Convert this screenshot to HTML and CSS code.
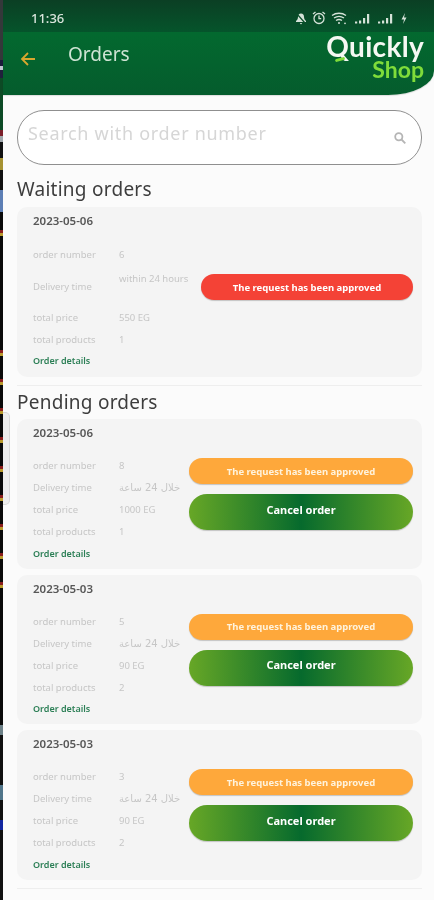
FILE: index.html
```html
<!DOCTYPE html>
<html lang="en">
<head>
<meta charset="utf-8">
<title>Orders</title>
<link rel="stylesheet" href="styles.css">
</head>
<body>
<div class="edge"></div>
<div class="phone">
  <div class="side-tab"></div>
  <div class="top">
    <div class="status">
      <span class="clock">11:36</span>
      <div class="status-icons">
        <svg width="12" height="13" viewBox="0 0 12 13"><path d="M6 1.500c-2 0-3 1.500-3 3.500 0 2-1 3-2 4v1h10V9c-1-1-2-2-2-4 0-2-1-3.500-3-3.500zM4.800 11h2.400L6 12.500z" fill="#d5e2d8"/><path d="M2 2l8 9" stroke="#0a4f2a" stroke-width="1.200"/></svg>
        <svg width="14" height="14" viewBox="0 0 14 14" fill="none" stroke="#d5e2d8" stroke-width="1.300"><circle cx="7" cy="7.500" r="5"/><path d="M7 4.500v3.200h2.200M1 3l2.500-2M13 3l-2.500-2"/></svg>
        <svg width="18" height="13" viewBox="0 0 18 13" fill="none" stroke="#d5e2d8" stroke-width="1.300"><path d="M1 3.500c4-3 10-3 14 0M3 6c3-2 7-2 10 0M5 8.500c2-1.300 4-1.300 6 0"/><circle cx="8" cy="11" r="1" fill="#d5e2d8" stroke="none"/><circle cx="14" cy="11.300" r=".9" fill="#d5e2d8" stroke="none"/></svg>
        <svg width="18" height="12" viewBox="0 0 18 12" fill="#d5e2d8"><rect x="1" y="9.500" width="2.200" height="2"/><rect x="5" y="8.500" width="2.200" height="3"/><rect x="9" y="6" width="2.200" height="5.500"/><rect x="13" y="2" width="2.200" height="9.500"/></svg>
        <svg width="18" height="12" viewBox="0 0 18 12" fill="#d5e2d8"><rect x="1" y="9.500" width="2.200" height="2"/><rect x="5" y="8.500" width="2.200" height="3"/><rect x="9" y="6" width="2.200" height="5.500"/><rect x="13" y="2" width="2.200" height="9.500"/></svg>
        <svg width="8" height="13" viewBox="0 0 8 13"><path d="M5 1L1.500 7.500H4L3 12l3.500-6.500H4z" fill="#d5e2d8"/></svg>
      </div>
    </div>
    <header class="app-bar">
      <svg class="back" width="16" height="14" viewBox="0 0 16 14" fill="none" stroke="#d9a62e" stroke-width="1.800"><path d="M15 7H2M8 1L2 7l6 6"/></svg>
      <h1 class="page-title">Orders</h1>
      <div class="logo">
        <span class="logo-main">Quickly</span>
        <span class="logo-sub">Shop</span>
        <span class="logo-swoosh"></span>
      </div>
    </header>
  </div>

  <main class="content">
    <div class="search">
      <span class="search-text">Search with order number</span>
      <svg class="search-icon" width="14" height="14" viewBox="0 0 14 14" fill="none" stroke="#b5b5b5" stroke-width="1.800"><circle cx="5.800" cy="5.800" r="3.600"/><path d="M8.500 8.500l3.800 3.800"/></svg>
    </div>

    <h2 class="section-title">Waiting orders</h2>
    <article class="card card-first">
      <div class="date">2023-05-06</div>
      <div class="card-body card-body-first">
        <div class="info info-tall">
          <span class="label">order number</span><span class="value">6</span>
          <span class="label tall">Delivery time</span><span class="value tall-value">within 24 hours</span>
          <span class="label">total price</span><span class="value">550 EG</span>
          <span class="label">total products</span><span class="value">1</span>
          <span class="details">Order details</span>
        </div>
        <div class="actions actions-single">
          <div class="pill pill-red">The request has been approved</div>
        </div>
      </div>
    </article>
    <div class="divider"></div>

    <h2 class="section-title section-title-next">Pending orders</h2>
    <div class="cards">
      <article class="card">
        <div class="date">2023-05-06</div>
        <div class="card-body">
          <div class="info">
            <span class="label">order number</span><span class="value">8</span>
            <span class="label">Delivery time</span><span class="value ar" dir="rtl">خلال 24 ساعة</span>
            <span class="label">total price</span><span class="value">1000 EG</span>
            <span class="label">total products</span><span class="value">1</span>
            <span class="details">Order details</span>
          </div>
          <div class="actions">
            <div class="pill pill-orange">The request has been approved</div>
            <div class="pill pill-green">Cancel order</div>
          </div>
        </div>
      </article>
      <article class="card">
        <div class="date">2023-05-03</div>
        <div class="card-body">
          <div class="info">
            <span class="label">order number</span><span class="value">5</span>
            <span class="label">Delivery time</span><span class="value ar" dir="rtl">خلال 24 ساعة</span>
            <span class="label">total price</span><span class="value">90 EG</span>
            <span class="label">total products</span><span class="value">2</span>
            <span class="details">Order details</span>
          </div>
          <div class="actions">
            <div class="pill pill-orange">The request has been approved</div>
            <div class="pill pill-green">Cancel order</div>
          </div>
        </div>
      </article>
      <article class="card">
        <div class="date">2023-05-03</div>
        <div class="card-body">
          <div class="info">
            <span class="label">order number</span><span class="value">3</span>
            <span class="label">Delivery time</span><span class="value ar" dir="rtl">خلال 24 ساعة</span>
            <span class="label">total price</span><span class="value">90 EG</span>
            <span class="label">total products</span><span class="value">2</span>
            <span class="details">Order details</span>
          </div>
          <div class="actions">
            <div class="pill pill-orange">The request has been approved</div>
            <div class="pill pill-green">Cancel order</div>
          </div>
        </div>
      </article>
    </div>
    <div class="divider"></div>
  </main>
</div>
</body>
</html>
```

FILE: styles.css
```css
* { box-sizing: border-box; }
html, body { margin: 0; padding: 0; }
body {
  width: 434px;
  height: 900px;
  overflow: hidden;
  display: flex;
  background: #fbfbfb;
  font-family: "Noto Sans", "DejaVu Sans", sans-serif;
}
.edge {
  width: 3px;
  flex: none;
  background:
    repeating-linear-gradient(to bottom, #0a0a0a 0 20px, #8a1c1c 20px 23px, #b99a2c 23px 26px, #0a0a0a 26px 29px) 0 330px / 100% 275px no-repeat,
    linear-gradient(to bottom,
      #34383a 0 60px, #1b1b3a 60px 66px, #bfc4d0 66px 70px, #20203c 70px 78px, #0d4a25 78px 130px,
      #7a1f2a 130px 136px, #9fa6ab 136px 142px, #111 142px 158px, #a69232 158px 170px, #111 170px 190px,
      #5d7fb5 190px 212px, #0a0a0a 212px 230px, #8a1c1c 230px 233px, #b99a2c 233px 236px, #0a0a0a 236px 330px,
      #0a0a0a 605px 725px, #6c8087 725px 735px, #111 735px 785px, #51758a 785px 800px, #111 800px 820px, #1226a0 820px 830px, #111 830px);
}
.phone {
  position: relative;
  flex: 1;
  min-width: 0;
  filter: blur(.45px);
}
.side-tab {
  position: absolute;
  left: 0;
  top: 412px;
  width: 7px;
  height: 93px;
  background: #eeeeee;
  border: 1px solid #d8d8d8;
  border-left: 0;
  border-radius: 0 5px 5px 0;
}
.status {
  height: 32px;
  display: flex;
  align-items: center;
  justify-content: space-between;
  padding: 8px 26px 4px 28px;
  background: linear-gradient(to bottom, #0b3f24, #05542b);
}
.clock {
  font-size: 13px;
  font-weight: 500;
  color: #dbe6dd;
}
.status-icons {
  display: flex;
  align-items: center;
  gap: 5px;
}
.app-bar {
  position: relative;
  height: 63px;
  display: flex;
  align-items: flex-start;
  padding: 0 0 0 17px;
  background: linear-gradient(to bottom, #03692f, #055c2d);
  border-bottom-right-radius: 46px 24px;
  box-shadow: 0 1px 1px rgba(0, 0, 0, .12);
}
.back { margin-top: 20px; }
.page-title {
  margin: 9px 0 0 32px;
  font-size: 19px;
  line-height: 26px;
  font-weight: 400;
  color: #cfe4d4;
}
.logo {
  position: absolute;
  right: 10px;
  top: 2px;
  display: flex;
  flex-direction: column;
  align-items: flex-end;
}
.logo-main {
  font-family: Lato, "Noto Sans", sans-serif;
  font-size: 28px;
  line-height: 25px;
  font-weight: 700;
  color: #f5f8f3;
  letter-spacing: .3px;
}
.logo-sub {
  font-family: Lato, "Noto Sans", sans-serif;
  font-size: 23px;
  line-height: 21px;
  font-weight: 700;
  color: #7fdc3a;
}
.logo-swoosh {
  position: absolute;
  left: 9px;
  top: 24px;
  width: 10px;
  height: 3px;
  border-radius: 2px;
  background: #7fdc3a;
  transform: rotate(-15deg);
}
.content { padding: 15px 12px 0 14px; }
.search {
  height: 55px;
  display: flex;
  align-items: flex-start;
  justify-content: space-between;
  padding: 9px 14px 0 10px;
  background: #fff;
  border: 1px solid #8f8f8f;
  border-radius: 27px;
}
.search-text {
  font-size: 18px;
  line-height: 26px;
  letter-spacing: .7px;
  color: #d6d6d6;
}
.search-icon { margin: 11px 0 0; }
.section-title {
  margin: 12px 0 6px;
  font-size: 19px;
  line-height: 24px;
  font-weight: 400;
  color: #3d3d3d;
  letter-spacing: .25px;
}
.section-title-next { margin-top: 4px; margin-bottom: 5px; }
.cards {
  display: flex;
  flex-direction: column;
  gap: 6px;
}
.card {
  padding: 0 9px 4.500px 16px;
  background: #f4f4f4;
  border-radius: 10px;
}
.card-first { padding-bottom: 6px; }
.date {
  height: 28px;
  font-size: 11.500px;
  line-height: 28px;
  font-weight: 600;
  color: #575757;
}
.card-body {
  display: flex;
  justify-content: space-between;
  margin-top: 8px;
}
.card-body-first { margin-top: 9px; }
.info {
  display: grid;
  grid-template-columns: 86px auto;
  grid-template-rows: 22px 22px 22px 22px 21px;
  align-content: start;
  align-items: center;
  font-size: 9.500px;
  color: #c6c6c6;
}
.info-tall { grid-template-rows: 22px 41px 22px 22px 20px; }
.label, .value { line-height: 22px; white-space: nowrap; }
.value.ar { font-family: "DejaVu Sans", sans-serif; font-size: 10px; text-align: right; }
.tall { height: 41px; line-height: 41px; }
.tall-value { height: 41px; line-height: 26px; }
.details {
  grid-column: 1 / -1;
  font-size: 9px;
  line-height: 20px;
  font-weight: 600;
  color: #2c7f56;
}
.actions {
  width: 224px;
  display: flex;
  flex-direction: column;
  gap: 10px;
  padding-top: 3px;
}
.actions-single { width: 212px; padding-top: 30px; }
.pill {
  display: flex;
  align-items: center;
  justify-content: center;
  height: 26px;
  border-radius: 13px;
  font-size: 9.500px;
  font-weight: 700;
  color: #fff;
  box-shadow: 0 1px 1px rgba(0, 0, 0, .2);
}
.pill-red { background: #f44236; }
.pill-orange { background: #fea83b; color: #fff3dc; }
.pill-green {
  height: 36px;
  border-radius: 18px;
  padding-bottom: 6px;
  font-size: 11px;
  background: linear-gradient(to right, #67a726, #066a2d 50%, #67a726);
}
.divider {
  height: 1px;
  margin-top: 8px;
  background: #eeeeee;
}
```
